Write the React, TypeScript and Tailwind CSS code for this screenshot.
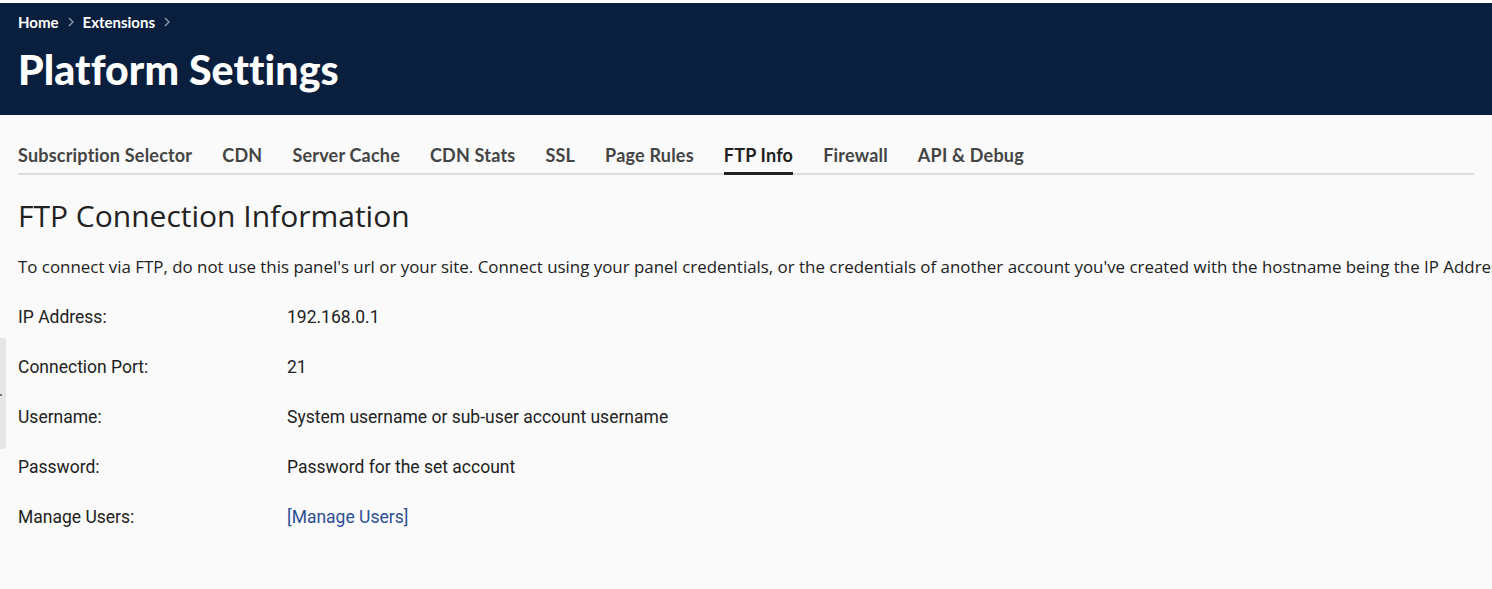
import React from "react";

const tabs = [
  "Subscription Selector",
  "CDN",
  "Server Cache",
  "CDN Stats",
  "SSL",
  "Page Rules",
  "FTP Info",
  "Firewall",
  "API & Debug",
];

const rows: [string, React.ReactNode][] = [
  ["IP Address:", "192.168.0.1"],
  ["Connection Port:", "21"],
  ["Username:", "System username or sub-user account username"],
  ["Password:", "Password for the set account"],
  [
    "Manage Users:",
    <a className="text-[#2c4f94]" href="#">
      [Manage Users]
    </a>,
  ],
];

function Chevron() {
  return (
    <svg width="8" height="10" viewBox="0 0 8 10" className="mx-[8px]">
      <path d="M2 1l4 4-4 4" fill="none" stroke="#9aa3b2" strokeWidth="1.2" />
    </svg>
  );
}

export default function App() {
  return (
    <div className="min-h-[589px] w-full bg-[#fafafa] overflow-hidden relative" style={{ fontFamily: "Lato, 'Noto Sans', sans-serif" }}>
      <div className="h-[3px] bg-white" />
      <header className="bg-[#0a1f3e] h-[112px] px-[18px] pt-[10px]">
        <nav className="flex items-center text-white text-[15px] font-bold h-[18px]">
          <span>Home</span>
          <Chevron />
          <span>Extensions</span>
          <Chevron />
        </nav>
        <h1 className="text-white text-[41px] font-black leading-none mt-[18px] tracking-[0.1px]">Platform Settings</h1>
      </header>
      <div className="px-[18px]">
        <div className="flex gap-[30px] border-b-2 border-[#dddddd] mt-[29px] h-[31px] whitespace-nowrap">
          {tabs.map((t) => (
            <div
              key={t}
              className={
                "text-[18px] font-bold leading-none pt-[2px] h-[31px] tracking-[0.2px] " +
                (t === "FTP Info" ? "text-[#222222] border-b-[3px] border-[#222222] -mb-[2px]" : "text-[#444444]")
              }
            >
              {t}
            </div>
          ))}
        </div>
        <h2
          className="text-[30px] text-[#222222] mt-[23px] leading-[36px]"
          style={{ fontFamily: "'Open Sans', sans-serif" }}
        >
          FTP Connection Information
        </h2>
        <p
          className="text-[16.9px] text-[#222222] mt-[22px] whitespace-nowrap leading-[22px]"
          style={{ fontFamily: "'Open Sans', sans-serif" }}
        >
          To connect via FTP, do not use this panel's url or your site. Connect using your panel credentials, or the credentials of another account you've created with the hostname being the IP Address
        </p>
        <div className="mt-[28px] flex flex-col gap-[28px]" style={{ fontFamily: "Roboto, sans-serif" }}>
          {rows.map(([l, v]) => (
            <div key={l} className="flex text-[17.5px] text-[#222222] leading-[22px]">
              <div className="w-[269px]">{l}</div>
              <div>{v}</div>
            </div>
          ))}
        </div>
      </div>
      <div className="absolute left-0 top-[338px] w-[6px] h-[111px] bg-[#e6e6e6] rounded-r-[3px]">
        <div className="absolute left-0 top-[56px] w-[2px] h-[2px] bg-[#777]" />
      </div>
    </div>
  );
}
